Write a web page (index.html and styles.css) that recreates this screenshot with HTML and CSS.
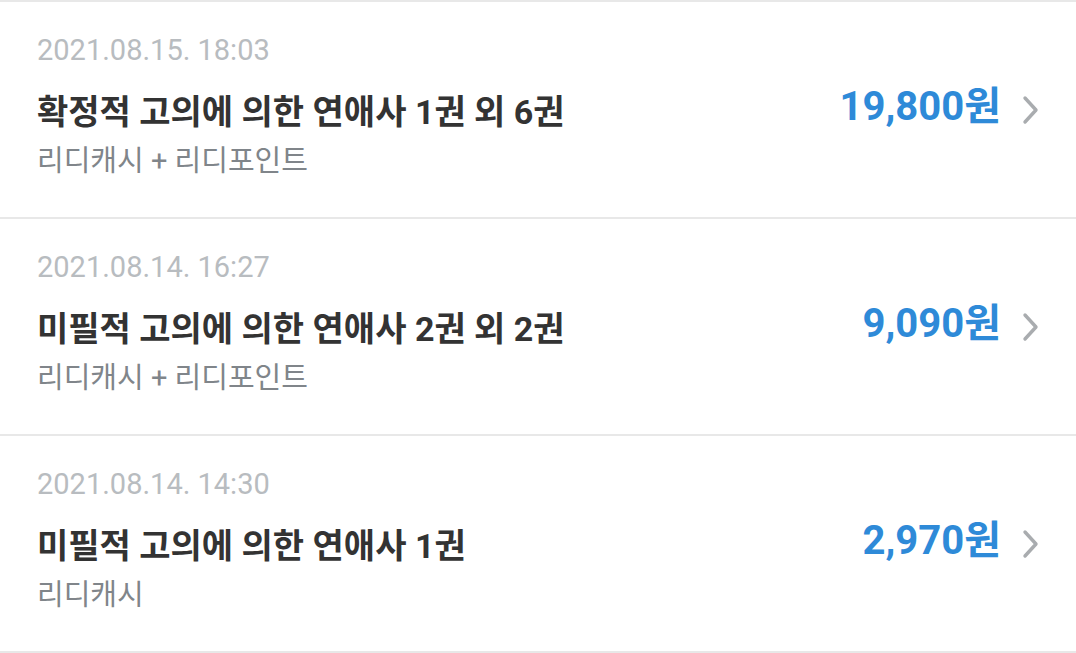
FILE: index.html
```html
<html>
<head>
<meta charset="utf-8">
<title>구매 내역</title>
<link rel="stylesheet" href="styles.css">
</head>
<body>
<div id="list">
  <div class="row">
    <div class="info">
      <div class="date">2021.08.15. 18:03</div>
      <div class="title">확정적 고의에 의한 연애사 1권 외 6권</div>
      <div class="pay">리디캐시 + 리디포인트</div>
    </div>
    <div class="price">19,800원</div>
    <svg class="arrow" width="20" height="30" viewBox="0 0 20 30"><path d="M4 3 L15 15 L4 27" fill="none" stroke="#a9acaf" stroke-width="3.4" stroke-linecap="round" stroke-linejoin="round"/></svg>
  </div>
  <div class="row">
    <div class="info">
      <div class="date">2021.08.14. 16:27</div>
      <div class="title">미필적 고의에 의한 연애사 2권 외 2권</div>
      <div class="pay">리디캐시 + 리디포인트</div>
    </div>
    <div class="price">9,090원</div>
    <svg class="arrow" width="20" height="30" viewBox="0 0 20 30"><path d="M4 3 L15 15 L4 27" fill="none" stroke="#a9acaf" stroke-width="3.4" stroke-linecap="round" stroke-linejoin="round"/></svg>
  </div>
  <div class="row">
    <div class="info">
      <div class="date">2021.08.14. 14:30</div>
      <div class="title">미필적 고의에 의한 연애사 1권</div>
      <div class="pay">리디캐시</div>
    </div>
    <div class="price">2,970원</div>
    <svg class="arrow" width="20" height="30" viewBox="0 0 20 30"><path d="M4 3 L15 15 L4 27" fill="none" stroke="#a9acaf" stroke-width="3.4" stroke-linecap="round" stroke-linejoin="round"/></svg>
  </div>
</div>
</body>
</html>
```
FILE: styles.css
```css
body {
    margin: 0;
    background-color: #ffffff;
    font-family: Roboto, "Noto Sans CJK KR", sans-serif;
}
#list {
    border-top: 2px solid #e8e8e8;
}
.row {
    display: flex;
    align-items: center;
    height: 215px;
    padding: 0 35px 0 37px;
    border-bottom: 2px solid #e8e8e8;
}
.info {
    flex: 1;
    align-self: flex-start;
    padding-top: 28px;
}
.date {
    font-size: 29px;
    line-height: 40px;
    color: #b8bcc0;
}
.title {
    margin-top: 20px;
    font-size: 34px;
    line-height: 44px;
    font-weight: bold;
    color: #333333;
}
.pay {
    margin-top: 9px;
    font-size: 29px;
    line-height: 36px;
    color: #80858a;
}
.price {
    font-size: 40px;
    font-weight: bold;
    color: #2e8ad8;
    margin-bottom: 14px;
}
.arrow {
    margin-left: 20px;
}
```
